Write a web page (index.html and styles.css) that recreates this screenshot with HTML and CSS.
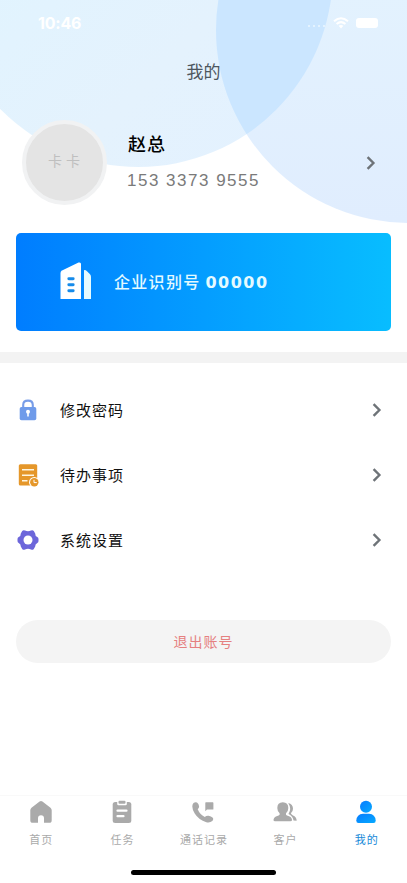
FILE: index.html
```html
<!DOCTYPE html>
<html lang="zh-CN">
<head>
<meta charset="utf-8">
<title>我的</title>
<link rel="stylesheet" href="styles.css">
</head>
<body>
<div class="page">
  <svg class="backdrop" width="407" height="230" viewBox="0 0 407 230" aria-hidden="true">
    <defs>
      <linearGradient id="skyA" x1="0" y1="0" x2="1" y2="1"><stop offset=".2" stop-color="#e0f4ff"/><stop offset=".65" stop-color="#e4f2fd"/><stop offset="1" stop-color="#e3f1ff"/></linearGradient>
      <linearGradient id="skyB" x1="0" y1="0" x2="0" y2="1"><stop offset=".4" stop-color="#e3f2fe"/><stop offset="1" stop-color="#e0edfe"/></linearGradient>
      <clipPath id="left"><circle cx="138.6" cy="-27.3" r="194.2"/></clipPath>
    </defs>
    <circle cx="138.6" cy="-27.3" r="194.2" fill="url(#skyA)"/>
    <circle cx="409" cy="30" r="193" fill="url(#skyB)"/>
    <circle cx="409" cy="30" r="193" fill="#cbe6ff" clip-path="url(#left)"/>
  </svg>

  <header class="status">
    <span class="time">10:46</span>
    <span class="indicators">
      <span class="dots"><i></i><i></i><i></i><i></i></span>
      <svg width="16" height="12" viewBox="0 0 16 12" fill="none" stroke="#fff" stroke-width="2"><path d="M1 4.3Q8-1.9 15 4.3M3.6 7Q8 3.2 12.4 7"/><path d="M5.6 8.8Q8 7 10.4 8.8L8 11.5Z" fill="#fff" stroke="none"/></svg>
      <span class="battery"></span>
    </span>
  </header>
  <h1 class="title">我的</h1>

  <section class="profile">
    <div class="avatar">卡卡</div>
    <div class="who">
      <div class="name">赵总</div>
      <div class="phone">153 3373 9555</div>
    </div>
    <svg class="chevron" width="10" height="16" viewBox="0 0 10 16"><path d="M1.6 2.2L7.4 8L1.6 13.8"/></svg>
  </section>

  <section class="company">
    <svg width="32" height="38" viewBox="0 0 32 38"><path d="M.5 37V11Q.5 9.4 2 8.6L18.500 .6Q21 -.2 21 2V37Z" fill="#fff"/><path d="M24 8.200Q25.500 7.800 27 9.300L29.800 12Q31 13.200 31 15V37H24Z" fill="#e5fbff"/><path d="M8.800 16.700H13.200M8.800 22.700H13.200M8.800 28.700H13.200" stroke="#168bea" stroke-width="2.900" stroke-linecap="round"/></svg>
    <div class="code">企业识别号 <b>00000</b></div>
  </section>

  <div class="divider"></div>

  <nav class="menu">
    <div class="row">
      <svg class="icon" width="22" height="24" viewBox="0 0 22 24"><path d="M6.200 10V7Q6.200 2.600 11 2.600T15.800 7V10" fill="none" stroke="#789de8" stroke-width="2.100"/><rect x="2.700" y="9" width="16.600" height="13.200" rx="1.800" fill="#6f9bea"/><circle cx="11" cy="13.700" r="2" fill="#fff"/><path d="M10.200 14h1.600v4.600h-1.600z" fill="#fff"/></svg>
      <span class="label">修改密码</span>
      <svg class="chevron" width="10" height="16" viewBox="0 0 10 16"><path d="M1.600 2.200L7.400 8L1.600 13.800"/></svg>
    </div>
    <div class="row">
      <svg class="icon" width="22" height="24" viewBox="0 0 22 24"><rect x="1.800" y="1.200" width="18.400" height="21.400" rx="1.500" fill="#e5972a"/><path d="M5 6.800H17M5 12.300H17M5 17.800H10.500" stroke="#fff5df" stroke-width="1.500"/><circle cx="17.300" cy="19.200" r="5.300" fill="#fff"/><circle cx="17.300" cy="19.200" r="4.200" fill="#e5972a"/><path d="M17 16.800V19.600H19.800" fill="none" stroke="#fff" stroke-width="1"/></svg>
      <span class="label">待办事项</span>
      <svg class="chevron" width="10" height="16" viewBox="0 0 10 16"><path d="M1.600 2.200L7.400 8L1.600 13.800"/></svg>
    </div>
    <div class="row">
      <svg class="icon" width="22" height="24" viewBox="0 0 22 24"><path d="M5.200 3Q6.400 1.600 8 2.500Q11 3.800 14 2.500Q15.600 1.600 16.800 3L18.200 5.500Q18 8 20.300 9Q21.500 9.600 21.500 11V13Q21.500 14.400 20.300 15Q18 16 18.200 18.500L16.800 21Q15.600 22.400 14 21.500Q11 20.200 8 21.500Q6.400 22.400 5.200 21L3.800 18.500Q4 16 1.700 15Q.5 14.400 .5 13V11Q.5 9.600 1.700 9Q4 8 3.800 5.500Z" fill="#6c66da"/><circle cx="11" cy="12" r="4.500" fill="#fff"/></svg>
      <span class="label">系统设置</span>
      <svg class="chevron" width="10" height="16" viewBox="0 0 10 16"><path d="M1.600 2.200L7.400 8L1.600 13.800"/></svg>
    </div>
  </nav>

  <button class="logout">退出账号</button>

  <footer class="tabs">
    <div class="tab">
      <svg width="24" height="24" viewBox="0 0 24 24"><path d="M10.600 1.500Q12 .5 13.400 1.500L21.500 7.800Q22.700 8.800 22.700 10.300V20.200Q22.700 22.800 20.200 22.800H15V18.200Q15 15.200 12 15.200T9 18.200V22.800H3.800Q1.300 22.800 1.300 20.200V10.300Q1.300 8.800 2.500 7.800Z" fill="#aaa"/></svg>
      <span>首页</span>
    </div>
    <div class="tab">
      <svg width="24" height="24" viewBox="0 0 24 24"><rect x="2.700" y="2" width="18.600" height="21" rx="2.500" fill="#aaa"/><rect x="7.200" y="-.2" width="9.600" height="5.400" rx="1.200" fill="#fff"/><rect x="8.500" y=".8" width="7" height="3" rx="1" fill="#aaa"/><path d="M7.500 10.700H16.500M7.500 16.200H13.500" stroke="#fff" stroke-width="2.200" stroke-linecap="round"/></svg>
      <span>任务</span>
    </div>
    <div class="tab">
      <svg width="24" height="24" viewBox="0 0 24 24"><path d="M2.500 3Q4.300 1.600 6 2.600Q7.700 3.900 8.100 6.300Q8.200 7.900 6.700 9.200Q8.800 14.300 13.800 17.100Q15.300 15.500 17.600 15.800Q20.100 16.200 21.800 17.700Q22.900 19.400 21.300 21Q18.900 23.100 15.300 22.200Q7.800 20 3.700 13.500Q-.4 6.500 2.500 3Z" fill="#aaa"/><path d="M14.900 2.300H21.800Q22.400 2.300 22.400 2.900V9Q22.400 9.600 21.800 9.600H16L14.300 11.200V2.900Q14.300 2.300 14.900 2.300Z" fill="#aaa"/></svg>
      <span>通话记录</span>
    </div>
    <div class="tab">
      <svg width="24" height="24" viewBox="0 0 24 24"><path d="M15.200 3Q20 4 20 8.800Q20 11.700 17.900 13.300Q18 14.400 20 15.400Q23.500 16.700 23.700 20.700L20.500 20.500Q20 16.300 15.500 14Q18.900 8.500 15.200 3Z" fill="#aaa"/><path d="M9.800 2.200Q15.300 2.400 15.300 8Q15.300 11.300 13 13.300Q12.500 15 14 15.600Q18.600 16.600 19 19.800Q19.200 21.300 17.300 21.300H2.200Q.3 21.300 .5 19.800Q1 16.600 5.600 15.600Q7.100 15 6.600 13.300Q4.300 11.300 4.300 8Q4.300 2.400 9.800 2.200Z" fill="#aaa"/></svg>
      <span>客户</span>
    </div>
    <div class="tab active">
      <svg width="24" height="24" viewBox="0 0 24 24"><defs><linearGradient id="person" x1="0" y1="0" x2="1" y2="1"><stop stop-color="#087bff"/><stop offset="1" stop-color="#05aaff"/></linearGradient></defs><g fill="url(#person)"><circle cx="12" cy="6.800" r="6"/><path d="M9 13.700H15Q21.300 14.200 21.700 20.500Q21.800 23 19.500 23H4.500Q2.200 23 2.300 20.500Q2.700 14.200 9 13.700Z"/></g></svg>
      <span>我的</span>
    </div>
  </footer>
  <div class="home-bar"></div>
</div>
</body>
</html>
```
FILE: styles.css
```css
* { box-sizing: border-box; }

body {
  margin: 0;
  background: #fff;
  font-family: "Liberation Sans", "Noto Sans CJK SC", sans-serif;
}

.page {
  position: relative;
  display: flex;
  flex-direction: column;
  width: 407px;
  height: 883px;
  overflow: hidden;
}

.page > * { flex-shrink: 0; }

.backdrop {
  position: absolute;
  top: 0;
  left: 0;
  z-index: -1;
}

.status {
  display: flex;
  align-items: center;
  justify-content: space-between;
  height: 46px;
  padding: 0 29px 0 38px;
  color: #fff;
}

.time {
  font: bold 16px/20px Inter, sans-serif;
  letter-spacing: -0.2px;
}

.indicators { display: flex; align-items: center; }
.dots { display: flex; gap: 3px; margin: 5px 8px 0 0; }
.dots i { width: 2px; height: 2px; border-radius: 50%; background: #edf7ff; }
.battery { width: 22px; height: 10px; margin-left: 7px; border-radius: 3px; background: #fff; }

.title {
  height: 51px;
  margin: 0 0 1px;
  font: 400 17px/50px "Noto Sans CJK SC", sans-serif;
  text-align: center;
  color: #4d565e;
}

.profile {
  display: flex;
  align-items: center;
  height: 129px;
  padding: 0 31px 0 22px;
}

.avatar {
  width: 85px;
  height: 85px;
  border: 4px solid #f1f2f3;
  border-radius: 50%;
  background: #e4e4e4;
  color: #bfbfbf;
  font: 14px/73px "Noto Sans CJK SC", sans-serif;
  letter-spacing: 4px;
  text-indent: 3px;
  text-align: center;
}

.who { flex: 1; padding-left: 21px; }

.name {
  font: 500 18px/26px "Noto Sans CJK SC", sans-serif;
  letter-spacing: 1px;
  color: #000;
}

.phone {
  margin: 13px 0 2px -1px;
  font-size: 17px;
  line-height: 24px;
  letter-spacing: 1.5px;
  color: #7a7a7a;
}

.chevron {
  fill: none;
  stroke: #6e7378;
  stroke-width: 2.4;
}

.company {
  display: flex;
  align-items: center;
  height: 98px;
  margin: 6px 16px 0 16px;
  padding-left: 44px;
  gap: 22px;
  border-radius: 5px;
  background: linear-gradient(90deg, #007dff, #08bdff);
}

.company svg { margin-top: -2px; }

.code {
  font: 500 16px/24px "Noto Sans CJK SC", sans-serif;
  letter-spacing: 1.3px;
  color: #e4faff;
}

.code b { font: bold 16px/24px "DejaVu Sans", sans-serif; letter-spacing: 1.5px; }

.divider { height: 11px; margin-top: 21px; background: #f3f3f3; }

.menu { display: flex; flex-direction: column; padding: 14px 25px 0 17px; }
.row { display: flex; align-items: center; height: 65.3px; }

.label {
  flex: 1;
  padding-left: 21px;
  font: 400 15px/24px "Noto Sans CJK SC", sans-serif;
  letter-spacing: 1px;
  color: #111;
}

.logout {
  height: 43px;
  margin: 47px 16px 0;
  padding: 0;
  border: 0;
  border-radius: 22px;
  background: #f4f4f4;
  color: #e58080;
  font: 400 14px/43px "Noto Sans CJK SC", sans-serif;
  letter-spacing: 1px;
}

.tabs {
  display: grid;
  grid-template-columns: repeat(5, 1fr);
  height: 75px;
  margin-top: auto;
  border-top: 1px solid #f9f9f9;
  background: #fff;
}

.tab {
  display: flex;
  flex-direction: column;
  align-items: center;
  padding-top: 4px;
  gap: 6px;
  color: #aaa;
  font: 400 11px/18px "Noto Sans CJK SC", sans-serif;
  letter-spacing: 1px;
}

.tab span { padding-left: 1px; }
.tab.active { color: #1688d8; }

.home-bar {
  align-self: center;
  width: 145px;
  height: 5px;
  margin-bottom: 8px;
  border-radius: 3px;
  background: #000;
}
```
